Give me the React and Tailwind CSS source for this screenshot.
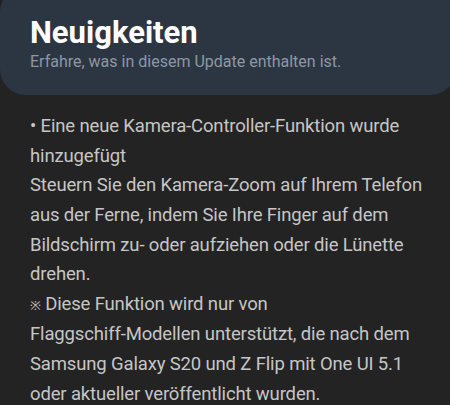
import React from "react";

const lines = [
  "• Eine neue Kamera-Controller-Funktion wurde",
  "hinzugefügt",
  "Steuern Sie den Kamera-Zoom auf Ihrem Telefon",
  "aus der Ferne, indem Sie Ihre Finger auf dem",
  "Bildschirm zu- oder aufziehen oder die Lünette",
  "drehen.",
  null,
  "Flaggschiff-Modellen unterstützt, die nach dem",
  "Samsung Galaxy S20 und Z Flip mit One UI 5.1",
  "oder aktueller veröffentlicht wurden.",
];

const App = () => {
  return (
    <div className="h-[405px] w-[450px] overflow-hidden bg-[#232323] font-['Roboto','Noto_Sans',sans-serif]">
      {/* Header panel */}
      <div className="-mt-[14px] h-[109px] w-[456px] rounded-[26px] bg-[#2c3642] pl-[30px] pt-[28px]">
        <h1 className="text-[31px] font-bold leading-[37px] text-white">Neuigkeiten</h1>
        <p className="mt-[1px] text-[16px] leading-[20px] text-[#8e98a3]">Erfahre, was in diesem Update enthalten ist.</p>
      </div>

      {/* Changelog */}
      <div className="mt-[17px] pl-[30px] text-[18.5px] leading-[29.63px] tracking-[-0.15px] text-[#c6c6c6]">
        {lines.map((line, i) =>
          line ? (
            <div key={i} className="whitespace-nowrap">
              {line}
            </div>
          ) : (
            <div key={i} className="whitespace-nowrap">
              <span className="text-[13px]">※</span> Diese Funktion wird nur von
            </div>
          )
        )}
      </div>
    </div>
  );
};

export default App;
